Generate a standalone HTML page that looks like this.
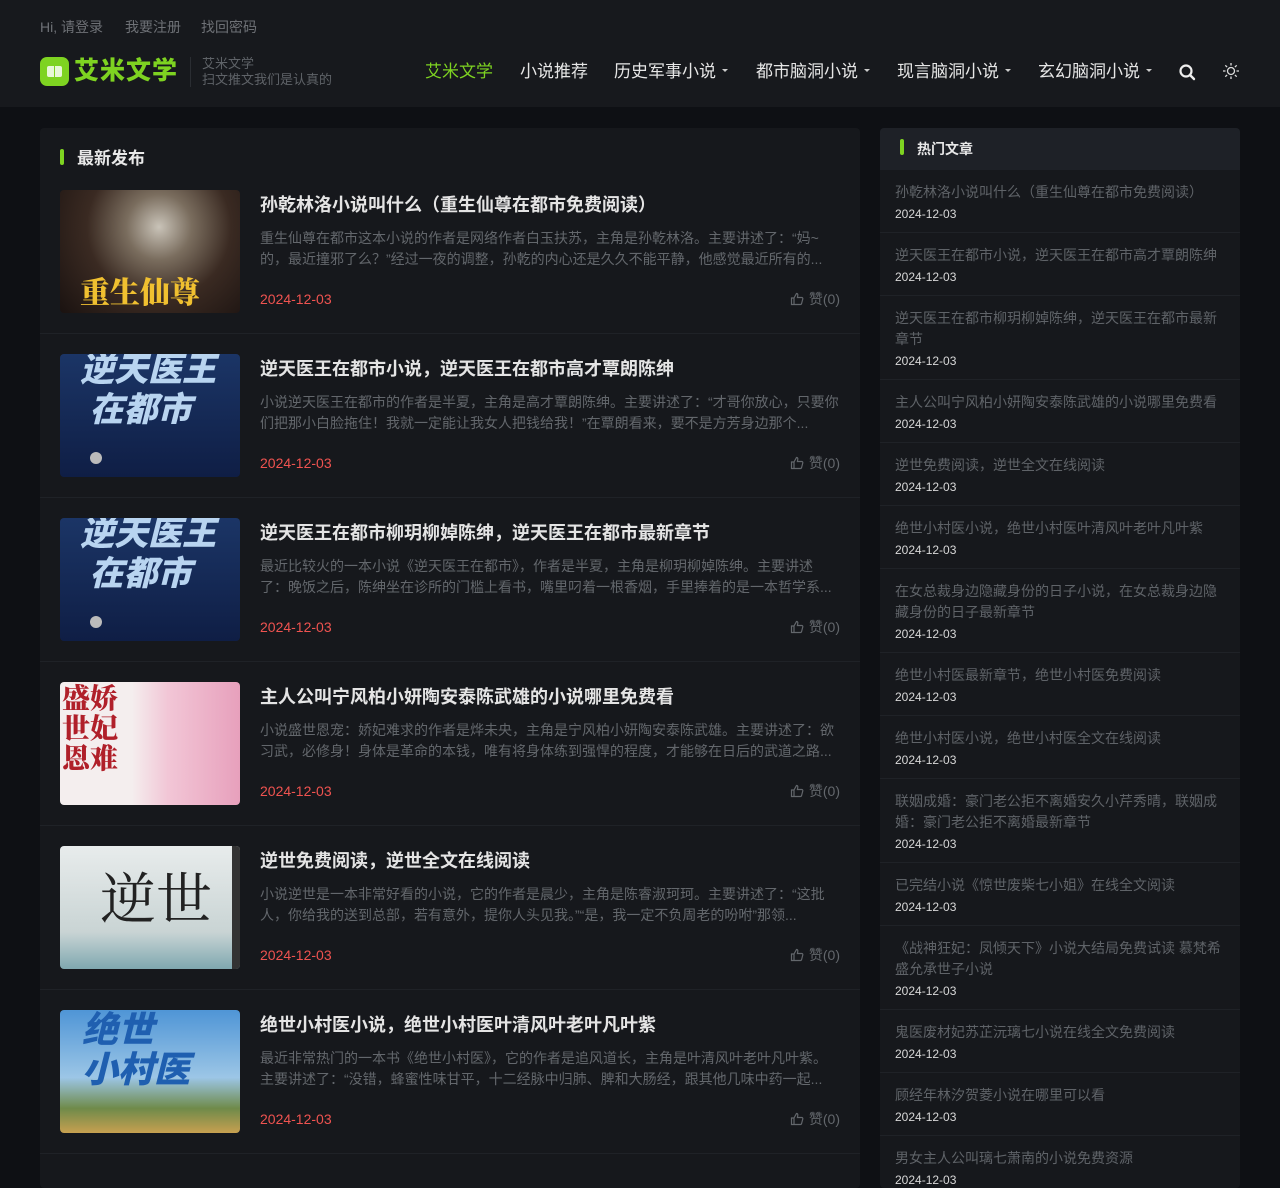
<!DOCTYPE html>
<html><head><meta charset="utf-8"><style>
*{margin:0;padding:0;box-sizing:border-box}
body{width:1280px;height:1167px;overflow:hidden;background:#0e1014;font-family:"Liberation Sans","Noto Sans CJK SC",sans-serif;color:#ddd;position:relative}
.hdr{position:absolute;left:0;top:0;width:1280px;height:107px;background:#17191d}
.abs{position:absolute;white-space:nowrap}
.top{top:17px;font-size:14px;color:#6e7176;line-height:20px}
.nav{top:60px;font-size:17px;color:#e6e6e6;line-height:24px}
.caret{display:inline-block;width:0;height:0;border-left:3px solid transparent;border-right:3px solid transparent;border-top:3px solid #ccc;vertical-align:middle;margin-left:6px;margin-top:-4px}
.main{position:absolute;left:40px;top:128px;width:820px;height:1060px;background:#16181c;border-radius:4px}
.mh{height:42px;padding:20px 0 0 20px;font-size:17px;font-weight:bold;color:#e8e8e8;line-height:22px}
.bar{display:inline-block;width:4px;height:16px;background:#7ed321;border-radius:2px;margin-right:13px;vertical-align:-1px}
.item{height:164px;padding:20px;border-bottom:1px solid #1f2227;position:relative}
.img{position:absolute;left:20px;top:20px;width:180px;height:123px;border-radius:4px;overflow:hidden}
.tx{position:absolute;left:220px;top:20px;width:580px}
.tt{font-size:18px;font-weight:bold;color:#e4e4e4;line-height:24px;margin-top:3px}
.ds{font-size:14px;color:#63676c;line-height:21px;margin-top:11px;height:42px;overflow:hidden}
.dt{position:absolute;left:0;top:99px;font-size:14px;color:#ef5350;line-height:20px}
.lk{position:absolute;right:0;top:99px;font-size:14px;color:#63676c;line-height:20px}
.lk svg{vertical-align:-2px;margin-right:5px}
.side{position:absolute;left:880px;top:128px;width:360px;height:1060px;background:#16181c;border-radius:4px;overflow:hidden}
.sh{height:42px;background:#1e2127;padding:11px 0 0 20px;font-size:14px;font-weight:bold;color:#e8e8e8;line-height:20px}
.si{padding:12px 15px 8px;border-bottom:1px solid #1f2227}
.st{font-size:14px;color:#5f6368;line-height:21px}
.sd{font-size:12px;color:#d8d8d8;line-height:21px;margin-top:1px;margin-bottom:-1px}
</style></head><body>
<div class="hdr"></div>
<div class="abs top" style="left:40px">Hi, 请登录</div>
<div class="abs top" style="left:125px">我要注册</div>
<div class="abs top" style="left:201px">找回密码</div>
<div class="abs" style="left:40px;top:57px;width:29px;height:29px;background:#7ed321;border-radius:7px"><div style="position:absolute;left:7px;top:9px;width:15px;height:11px;background:#e8f7d8;border-radius:2px"></div><div style="position:absolute;left:14px;top:9px;width:1px;height:11px;background:#7ed321"></div></div>
<div class="abs" style="left:74px;top:55px;font-size:25px;font-weight:900;color:#7ed321;line-height:32px;letter-spacing:1px">艾米文学</div>
<div class="abs" style="left:190px;top:57px;width:1px;height:30px;background:#2a2d32"></div>
<div class="abs" style="left:202px;top:56px;font-size:13px;color:#5f6368;line-height:16px">艾米文学<br>扫文推文我们是认真的</div>
<div class="abs nav" style="left:425px;color:#7ed321">艾米文学</div>
<div class="abs nav" style="left:520px">小说推荐</div>
<div class="abs nav" style="left:614px">历史军事小说<span class="caret"></span></div>
<div class="abs nav" style="left:756px">都市脑洞小说<span class="caret"></span></div>
<div class="abs nav" style="left:897px">现言脑洞小说<span class="caret"></span></div>
<div class="abs nav" style="left:1038px">玄幻脑洞小说<span class="caret"></span></div>
<svg class="abs" style="left:1178px;top:63px" width="18" height="18" viewBox="0 0 18 18"><circle cx="8" cy="8" r="5.5" fill="none" stroke="#eee" stroke-width="2.2"/><line x1="12" y1="12" x2="16" y2="16" stroke="#eee" stroke-width="2.4" stroke-linecap="round"/></svg>
<svg class="abs" style="left:1222px;top:62px" width="18" height="18" viewBox="0 0 18 18" stroke="#ddd" stroke-width="1.3" fill="none"><circle cx="9" cy="9" r="3.5"/><path d="M9 1v2.5M9 14.5V17M1 9h2.5M14.5 9H17M3.3 3.3l1.8 1.8M12.9 12.9l1.8 1.8M3.3 14.7l1.8-1.8M12.9 5.1l1.8-1.8"/></svg>

<div class="main">
<div class="mh"><span class="bar"></span>最新发布</div>

<div class="item"><div class="img" style="background:radial-gradient(circle at 55% 30%,#c9c3b8 0,#7a6d5e 25%,#3a2a22 55%,#1a1210 100%)"><div style="position:absolute;left:20px;top:78px;font-size:30px;font-weight:900;color:#f0c030;font-family:'Noto Serif CJK SC',serif">重生仙尊</div></div>
<div class="tx"><div class="tt">孙乾林洛小说叫什么（重生仙尊在都市免费阅读）</div><div class="ds">重生仙尊在都市这本小说的作者是网络作者白玉扶苏，主角是孙乾林洛。主要讲述了：“妈~的，最近撞邪了么？”经过一夜的调整，孙乾的内心还是久久不能平静，他感觉最近所有的...</div><div class="dt">2024-12-03</div><div class="lk"><svg width="14" height="14" viewBox="0 0 14 14" fill="none" stroke="#63676c" stroke-width="1.2"><path d="M1.5 6h2.5v6.5H1.5zM4 6l2.5-4.5c1 0 1.5.7 1.3 1.7L7.4 5.5h4.3c.8 0 1.3.7 1.1 1.4l-1.2 4.6c-.2.6-.6 1-1.2 1H4"/></svg>赞(0)</div></div></div>

<div class="item"><div class="img" style="background:linear-gradient(#1b3566,#0f1e45)"><div style="position:absolute;left:20px;top:-4px;font-size:34px;font-weight:900;color:#b8d4f0;line-height:40px;font-style:italic">逆天医王<br>&nbsp;在都市</div><div style="position:absolute;left:30px;top:98px;width:12px;height:12px;border-radius:50%;background:#bbb"></div></div>
<div class="tx"><div class="tt">逆天医王在都市小说，逆天医王在都市高才覃朗陈绅</div><div class="ds">小说逆天医王在都市的作者是半夏，主角是高才覃朗陈绅。主要讲述了：“才哥你放心，只要你们把那小白脸拖住！我就一定能让我女人把钱给我！”在覃朗看来，要不是方芳身边那个...</div><div class="dt">2024-12-03</div><div class="lk"><svg width="14" height="14" viewBox="0 0 14 14" fill="none" stroke="#63676c" stroke-width="1.2"><path d="M1.5 6h2.5v6.5H1.5zM4 6l2.5-4.5c1 0 1.5.7 1.3 1.7L7.4 5.5h4.3c.8 0 1.3.7 1.1 1.4l-1.2 4.6c-.2.6-.6 1-1.2 1H4"/></svg>赞(0)</div></div></div>

<div class="item"><div class="img" style="background:linear-gradient(#1b3566,#0f1e45)"><div style="position:absolute;left:20px;top:-4px;font-size:34px;font-weight:900;color:#b8d4f0;line-height:40px;font-style:italic">逆天医王<br>&nbsp;在都市</div><div style="position:absolute;left:30px;top:98px;width:12px;height:12px;border-radius:50%;background:#bbb"></div></div>
<div class="tx"><div class="tt">逆天医王在都市柳玥柳婥陈绅，逆天医王在都市最新章节</div><div class="ds">最近比较火的一本小说《逆天医王在都市》，作者是半夏，主角是柳玥柳婥陈绅。主要讲述了：晚饭之后，陈绅坐在诊所的门槛上看书，嘴里叼着一根香烟，手里捧着的是一本哲学系...</div><div class="dt">2024-12-03</div><div class="lk"><svg width="14" height="14" viewBox="0 0 14 14" fill="none" stroke="#63676c" stroke-width="1.2"><path d="M1.5 6h2.5v6.5H1.5zM4 6l2.5-4.5c1 0 1.5.7 1.3 1.7L7.4 5.5h4.3c.8 0 1.3.7 1.1 1.4l-1.2 4.6c-.2.6-.6 1-1.2 1H4"/></svg>赞(0)</div></div></div>

<div class="item"><div class="img" style="background:linear-gradient(90deg,#f4eeee 0,#f4eeee 40%,#f2c6d6 60%,#e7a0bc 100%)"><div style="position:absolute;left:2px;top:0;font-size:28px;font-weight:900;color:#b0202a;line-height:30px;font-family:'Noto Serif CJK SC',serif">盛娇<br>世妃<br>恩难</div></div>
<div class="tx"><div class="tt">主人公叫宁风柏小妍陶安泰陈武雄的小说哪里免费看</div><div class="ds">小说盛世恩宠：娇妃难求的作者是烨未央，主角是宁风柏小妍陶安泰陈武雄。主要讲述了：欲习武，必修身！身体是革命的本钱，唯有将身体练到强悍的程度，才能够在日后的武道之路...</div><div class="dt">2024-12-03</div><div class="lk"><svg width="14" height="14" viewBox="0 0 14 14" fill="none" stroke="#63676c" stroke-width="1.2"><path d="M1.5 6h2.5v6.5H1.5zM4 6l2.5-4.5c1 0 1.5.7 1.3 1.7L7.4 5.5h4.3c.8 0 1.3.7 1.1 1.4l-1.2 4.6c-.2.6-.6 1-1.2 1H4"/></svg>赞(0)</div></div></div>

<div class="item"><div class="img" style="background:linear-gradient(#e8ecec,#c9d4d4 70%,#7fa8b0)"><div style="position:absolute;left:40px;top:20px;font-size:56px;color:#222;font-family:'Noto Serif CJK SC',serif;line-height:60px">逆世</div><div style="position:absolute;right:0;top:0;width:8px;height:123px;background:#333"></div></div>
<div class="tx"><div class="tt">逆世免费阅读，逆世全文在线阅读</div><div class="ds">小说逆世是一本非常好看的小说，它的作者是晨少，主角是陈睿淑珂珂。主要讲述了：“这批人，你给我的送到总部，若有意外，提你人头见我。”“是，我一定不负周老的吩咐”那领...</div><div class="dt">2024-12-03</div><div class="lk"><svg width="14" height="14" viewBox="0 0 14 14" fill="none" stroke="#63676c" stroke-width="1.2"><path d="M1.5 6h2.5v6.5H1.5zM4 6l2.5-4.5c1 0 1.5.7 1.3 1.7L7.4 5.5h4.3c.8 0 1.3.7 1.1 1.4l-1.2 4.6c-.2.6-.6 1-1.2 1H4"/></svg>赞(0)</div></div></div>

<div class="item"><div class="img" style="background:linear-gradient(#4f95d6 0,#9cc6e6 55%,#6f8a4a 80%,#c7a050 100%)"><div style="position:absolute;left:22px;top:0;font-size:36px;font-weight:900;color:#1f5fb0;line-height:40px;font-style:italic">绝世<br>小村医</div></div>
<div class="tx"><div class="tt">绝世小村医小说，绝世小村医叶清风叶老叶凡叶紫</div><div class="ds">最近非常热门的一本书《绝世小村医》，它的作者是追风道长，主角是叶清风叶老叶凡叶紫。主要讲述了：“没错，蜂蜜性味甘平，十二经脉中归肺、脾和大肠经，跟其他几味中药一起...</div><div class="dt">2024-12-03</div><div class="lk"><svg width="14" height="14" viewBox="0 0 14 14" fill="none" stroke="#63676c" stroke-width="1.2"><path d="M1.5 6h2.5v6.5H1.5zM4 6l2.5-4.5c1 0 1.5.7 1.3 1.7L7.4 5.5h4.3c.8 0 1.3.7 1.1 1.4l-1.2 4.6c-.2.6-.6 1-1.2 1H4"/></svg>赞(0)</div></div></div>
</div>

<div class="side">
<div class="sh"><span class="bar"></span>热门文章</div>
<div class="si"><div class="st">孙乾林洛小说叫什么（重生仙尊在都市免费阅读）</div><div class="sd">2024-12-03</div></div>
<div class="si"><div class="st">逆天医王在都市小说，逆天医王在都市高才覃朗陈绅</div><div class="sd">2024-12-03</div></div>
<div class="si"><div class="st">逆天医王在都市柳玥柳婥陈绅，逆天医王在都市最新章节</div><div class="sd">2024-12-03</div></div>
<div class="si"><div class="st">主人公叫宁风柏小妍陶安泰陈武雄的小说哪里免费看</div><div class="sd">2024-12-03</div></div>
<div class="si"><div class="st">逆世免费阅读，逆世全文在线阅读</div><div class="sd">2024-12-03</div></div>
<div class="si"><div class="st">绝世小村医小说，绝世小村医叶清风叶老叶凡叶紫</div><div class="sd">2024-12-03</div></div>
<div class="si"><div class="st">在女总裁身边隐藏身份的日子小说，在女总裁身边隐藏身份的日子最新章节</div><div class="sd">2024-12-03</div></div>
<div class="si"><div class="st">绝世小村医最新章节，绝世小村医免费阅读</div><div class="sd">2024-12-03</div></div>
<div class="si"><div class="st">绝世小村医小说，绝世小村医全文在线阅读</div><div class="sd">2024-12-03</div></div>
<div class="si"><div class="st">联姻成婚：豪门老公拒不离婚安久小芹秀晴，联姻成婚：豪门老公拒不离婚最新章节</div><div class="sd">2024-12-03</div></div>
<div class="si"><div class="st">已完结小说《惊世废柴七小姐》在线全文阅读</div><div class="sd">2024-12-03</div></div>
<div class="si"><div class="st">《战神狂妃：凤倾天下》小说大结局免费试读 慕梵希盛允承世子小说</div><div class="sd">2024-12-03</div></div>
<div class="si"><div class="st">鬼医废材妃苏芷沅璃七小说在线全文免费阅读</div><div class="sd">2024-12-03</div></div>
<div class="si"><div class="st">顾经年林汐贺菱小说在哪里可以看</div><div class="sd">2024-12-03</div></div>
<div class="si"><div class="st">男女主人公叫璃七萧南的小说免费资源</div><div class="sd">2024-12-03</div></div>
</div>
</body></html>
